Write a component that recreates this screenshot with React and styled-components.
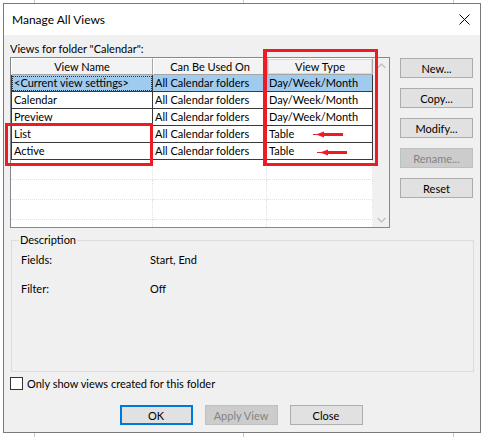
import React from "react";
import styled, { createGlobalStyle } from "styled-components";

const GlobalStyle = createGlobalStyle`
  html, body {
    margin: 0;
    padding: 0;
    background-color: #fff;
    background-image:
      linear-gradient(#c8c8c8, #c8c8c8),
      linear-gradient(#c8c8c8, #c8c8c8),
      linear-gradient(#c8c8c8, #c8c8c8);
    background-size: 1px 100%;
    background-position: 34px 0, 243px 0, 453px 0;
    background-repeat: no-repeat;
    font-family: Lato, "Noto Sans", sans-serif;
    font-size: 11px;
    color: #000;
  }
`;

const RED = "#ed1c24";

const Page = styled.div`
  position: relative;
  width: 483px;
  height: 437px;
  padding: 3px 0 0 3px;
  box-sizing: border-box;
`;

const Dialog = styled.div`
  width: 478px;
  height: 430px;
  box-sizing: border-box;
  border: 1px solid #7a7a7a;
  background: #f0f0f0;
  display: flex;
  flex-direction: column;
`;

const TitleBar = styled.div`
  height: 31px;
  background: #fff;
  display: flex;
  align-items: center;
  justify-content: space-between;
  padding: 0 10px 0 8px;
  font-size: 12px;
`;

const CloseX = styled.svg`
  width: 11px;
  height: 11px;
`;

const Body = styled.div`
  flex: 1;
  padding: 6px 7px 0 6px;
  display: flex;
  flex-direction: column;
`;

const TopArea = styled.div`
  display: flex;
  gap: 10px;
`;

const ListColumn = styled.div`
  width: 380px;
  display: flex;
  flex-direction: column;
`;

const Caption = styled.div`
  line-height: 16px;
  height: 16px;
  white-space: nowrap;
`;

const ListBox = styled.div`
  height: 171px;
  box-sizing: border-box;
  border: 1px solid #828790;
  background: #fff;
  display: flex;
`;

const Grid = styled.div`
  width: 362px;
  display: flex;
  flex-direction: column;
`;

const Row = styled.div`
  display: grid;
  grid-template-columns: 142px 114px 106px;
  height: ${(p) => p.$h}px;
`;

const HeadCell = styled.div`
  box-sizing: border-box;
  background: #f3f3f3;
  border-top: 1px solid #fff;
  border-left: 1px solid ${(p) => (p.$active ? "#b9b9b9" : "#fff")};
  border-right: 1px solid #a6a6a6;
  border-bottom: 1px solid #a6a6a6;
  box-shadow: ${(p) => (p.$active ? "inset 0 0 0 1px #d8d8d8" : "none")};
  text-align: center;
  line-height: 15px;
  white-space: nowrap;
`;

const Cell = styled.div`
  box-sizing: border-box;
  border-right: 1px solid #3a3a3a;
  border-bottom: 1px solid #3a3a3a;
  border-left: ${(p) => (p.$first ? "1px solid #3a3a3a" : "none")};
  background: ${(p) => (p.$selected ? "#9fcbef" : "#fff")};
  outline: ${(p) => (p.$selected && p.$first ? "1px dotted #333" : "none")};
  outline-offset: -2px;
  padding-left: 2px;
  line-height: 16px;
  white-space: nowrap;
  overflow: hidden;
`;

const EmptyCell = styled.div`
  box-sizing: border-box;
  border-right: 1px dotted #e2e2e2;
  border-bottom: ${(p) => (p.$last ? "none" : "1px dotted #e2e2e2")};
`;

const ScrollBar = styled.div`
  width: 16px;
  background: #f0f0f0;
  display: flex;
  flex-direction: column;
  justify-content: space-between;
  align-items: center;
  padding: 5px 0 4px;
  box-sizing: border-box;
`;

const Chevron = styled.svg`
  width: 9px;
  height: 6px;
`;

const ButtonColumn = styled.div`
  padding-top: 17px;
  display: flex;
  flex-direction: column;
  gap: 10px;
`;

const Button = styled.div`
  width: ${(p) => p.$w || 73}px;
  height: 20px;
  box-sizing: border-box;
  border: ${(p) =>
    p.$default ? "2px solid #0078d7" : p.$disabled ? "1px solid #bfbfbf" : "1px solid #adadad"};
  background: ${(p) => (p.$disabled ? "#cccccc" : "#e1e1e1")};
  color: ${(p) => (p.$disabled ? "#838383" : "#000")};
  display: flex;
  align-items: center;
  justify-content: center;
  white-space: nowrap;
`;

const GroupBox = styled.fieldset`
  margin: 5px 0 0 1px;
  width: 463px;
  height: 139px;
  box-sizing: border-box;
  border: 1px solid #dcdcdc;
  padding: 0 0 0 9px;
`;

const Legend = styled.legend`
  padding: 0 1px;
  margin-left: -2px;
  line-height: 14px;
`;

const InfoRow = styled.div`
  display: grid;
  grid-template-columns: 129px 1fr;
  line-height: 16px;
  margin-top: ${(p) => p.$mt}px;
`;

const CheckRow = styled.div`
  display: flex;
  align-items: center;
  gap: 4px;
  margin-top: 5px;
  height: 13px;
`;

const CheckBox = styled.div`
  width: 13px;
  height: 13px;
  box-sizing: border-box;
  border: 1px solid #333;
  background: #fff;
`;

const Footer = styled.div`
  display: flex;
  justify-content: center;
  gap: 12px;
  margin-top: 15px;
  padding-right: 1px;
`;

const RedBox = styled.div`
  position: absolute;
  box-sizing: border-box;
  border: 3px solid ${RED};
  border-left-width: ${(p) => p.$lw || 3}px;
  left: ${(p) => p.$x}px;
  top: ${(p) => p.$y}px;
  width: ${(p) => p.$w}px;
  height: ${(p) => p.$h}px;
`;

const Arrow = styled.svg`
  position: absolute;
  left: ${(p) => p.$x}px;
  top: ${(p) => p.$y}px;
  width: 30px;
  height: 7px;
`;

const rows = [
  ["<Current view settings>", "All Calendar folders", "Day/Week/Month", true],
  ["Calendar", "All Calendar folders", "Day/Week/Month"],
  ["Preview", "All Calendar folders", "Day/Week/Month"],
  ["List", "All Calendar folders", "Table"],
  ["Active", "All Calendar folders", "Table"],
];

const fillers = [20, 20, 20, 7];

function RedArrow({ x, y }) {
  return (
    <Arrow $x={x} $y={y} viewBox="0 0 30 7">
      <line x1="0" y1="3.5" x2="4" y2="3.5" stroke={RED} strokeWidth="1" />
      <polygon points="3,3.5 11,0.5 11,6.5" fill={RED} />
      <rect x="10" y="2" width="20" height="3" fill={RED} />
    </Arrow>
  );
}

export default function App() {
  return (
    <Page>
      <GlobalStyle />
      <Dialog>
        <TitleBar>
          <span>Manage All Views</span>
          <CloseX viewBox="0 0 11 11">
            <path d="M0.5 0.5 L10.5 10.5 M10.5 0.5 L0.5 10.5" stroke="#000" strokeWidth="1" />
          </CloseX>
        </TitleBar>
        <Body>
          <TopArea>
            <ListColumn>
              <Caption>Views for folder "Calendar":</Caption>
              <ListBox>
                <Grid>
                  <Row $h={17}>
                    <HeadCell>View Name</HeadCell>
                    <HeadCell>Can Be Used On</HeadCell>
                    <HeadCell $active>View Type</HeadCell>
                  </Row>
                  {rows.map(([name, used, type, sel]) => (
                    <Row key={name} $h={17}>
                      <Cell $first $selected={sel}>{name}</Cell>
                      <Cell $selected={sel}>{used}</Cell>
                      <Cell $selected={sel}>{type}</Cell>
                    </Row>
                  ))}
                  {fillers.map((h, i) => (
                    <Row key={i} $h={h}>
                      <EmptyCell $last={i === fillers.length - 1} />
                      <EmptyCell $last={i === fillers.length - 1} />
                      <EmptyCell $last={i === fillers.length - 1} />
                    </Row>
                  ))}
                </Grid>
                <ScrollBar>
                  <Chevron viewBox="0 0 9 6">
                    <path d="M0.5 5 L4.5 1 L8.5 5" stroke="#c2c2c2" strokeWidth="1.4" fill="none" />
                  </Chevron>
                  <Chevron viewBox="0 0 9 6">
                    <path d="M0.5 1 L4.5 5 L8.5 1" stroke="#c2c2c2" strokeWidth="1.4" fill="none" />
                  </Chevron>
                </ScrollBar>
              </ListBox>
            </ListColumn>
            <ButtonColumn>
              <Button>New...</Button>
              <Button>Copy...</Button>
              <Button>Modify...</Button>
              <Button $disabled>Rename...</Button>
              <Button>Reset</Button>
            </ButtonColumn>
          </TopArea>
          <GroupBox>
            <Legend>Description</Legend>
            <InfoRow $mt={5}>
              <span>Fields:</span>
              <span>Start, End</span>
            </InfoRow>
            <InfoRow $mt={13}>
              <span>Filter:</span>
              <span>Off</span>
            </InfoRow>
          </GroupBox>
          <CheckRow>
            <CheckBox />
            <span>Only show views created for this folder</span>
          </CheckRow>
          <Footer>
            <Button $default>OK</Button>
            <Button $disabled>Apply View</Button>
            <Button>Close</Button>
          </Footer>
        </Body>
      </Dialog>
      <RedBox $x={5} $y={123} $w={148} $h={43} />
      <RedBox $x={263} $y={49} $w={115} $h={117} $lw={4} />
      <RedArrow x={313} y={131} />
      <RedArrow x={317} y={149} />
    </Page>
  );
}
